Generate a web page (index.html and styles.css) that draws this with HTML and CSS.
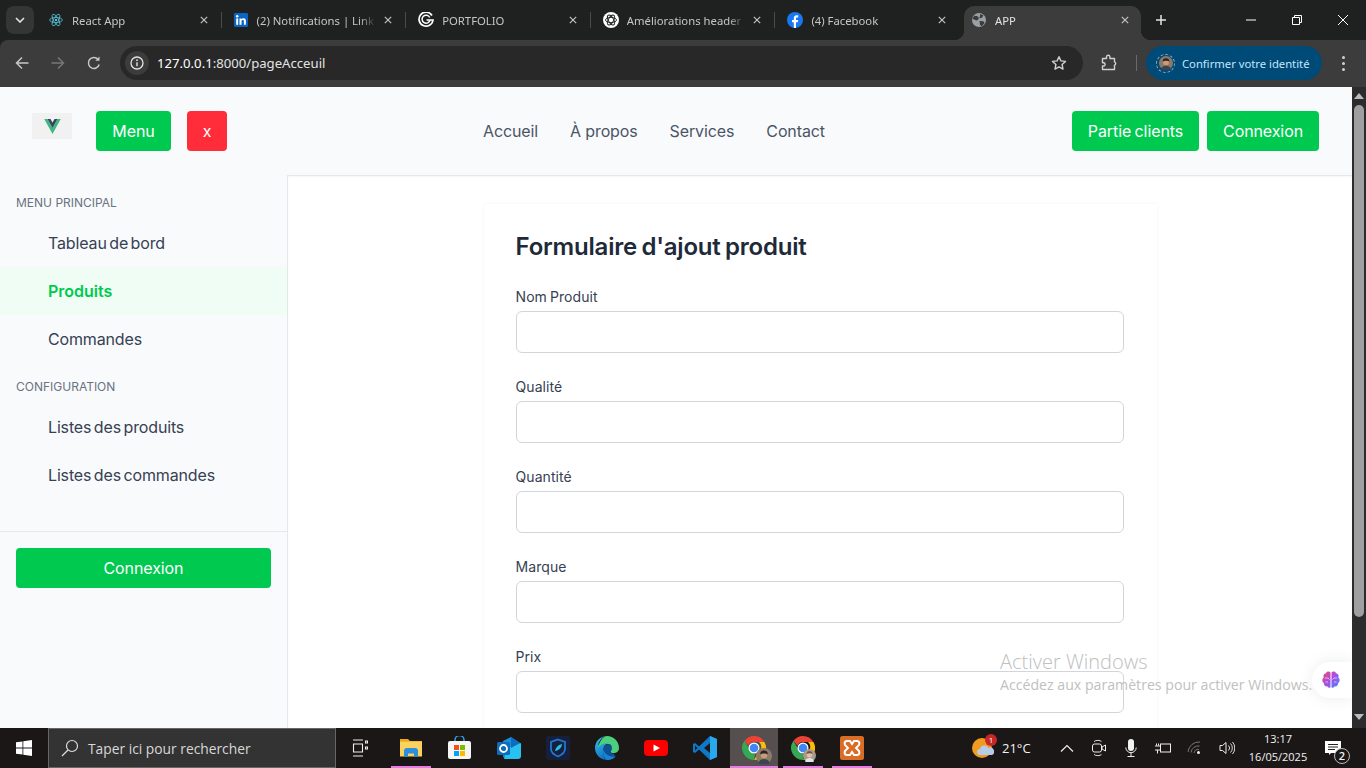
FILE: index.html
```html
<!DOCTYPE html>
<html lang="fr">
<head>
<meta charset="utf-8">
<title>APP</title>
<link rel="stylesheet" href="styles.css">
</head>
<body>
<svg class="defs" width="0" height="0">
  <symbol id="tabx" viewBox="0 0 10 10"><path d="M1 1l8 8M9 1L1 9" stroke="#c4c7c5" stroke-width="1.400"/></symbol>
  <symbol id="chromeicon" viewBox="0 0 24 24"><path d="M12 0a12 12 0 0 1 10.400 6H12a6 6 0 0 0-5.600 3.800L2.500 4.800A12 12 0 0 1 12 0z" fill="#ea4335"/><path d="M22.400 6A12 12 0 0 1 12 24l5-8.500A6 6 0 0 0 17 6z" fill="#fbbc04"/><path d="M12 24A12 12 0 0 1 2.500 4.800L7 12.500a6 6 0 0 0 6 5.500z" fill="#34a853"/><circle cx="12" cy="12" r="5.500" fill="#fff"/><circle cx="12" cy="12" r="4.300" fill="#4285f4"/></symbol>
  <symbol id="persona" viewBox="0 0 16 16"><circle cx="8" cy="8" r="8" fill="#8b7a68"/><path d="M2.500 15c.5-3 3-4 5.500-4s5 1 5.500 4a8 8 0 0 1-11 0z" fill="#3d4450"/><circle cx="8" cy="7" r="3.400" fill="#c89c78"/><path d="M4.300 6.500C4 3.500 6 2.500 8 2.500s4 1 3.700 4C10.500 5 6 5 4.300 6.500z" fill="#2b2320"/></symbol>
  <symbol id="personb" viewBox="0 0 16 16"><circle cx="8" cy="8" r="8" fill="#a89a8c"/><path d="M2.500 15c.5-3 3-4 5.500-4s5 1 5.500 4a8 8 0 0 1-11 0z" fill="#dfe3ea"/><circle cx="8" cy="7" r="3.400" fill="#e2c0a0"/><path d="M4.500 6C4.500 3.500 6 2.800 8 2.800s3.500.7 3.500 3.200C10 5 6 5 4.500 6z" fill="#6e5540"/></symbol>
</svg>
<div class="tabstrip">
  <div class="tabsearch"><svg width="10" height="6" viewBox="0 0 10 6"><path d="M1 1l4 4 4-4" fill="none" stroke="#e3e3e3" stroke-width="1.600"/></svg></div>
  <div class="tab sep">
    <svg class="fav" viewBox="0 0 16 16"><g fill="none" stroke="#58c4dc" stroke-width=".9"><ellipse cx="8" cy="8" rx="7.300" ry="2.900"/><ellipse cx="8" cy="8" rx="7.300" ry="2.900" transform="rotate(60 8 8)"/><ellipse cx="8" cy="8" rx="7.300" ry="2.900" transform="rotate(120 8 8)"/></g><circle cx="8" cy="8" r="1.400" fill="#58c4dc"/></svg>
    <span class="tab-title">React App</span><svg class="tab-x"><use href="#tabx"/></svg>
  </div>
  <div class="tab sep">
    <svg class="fav" viewBox="0 0 16 16"><rect width="16" height="16" rx="1.500" fill="#0a66c2"/><rect x="2.500" y="6.200" width="2.300" height="7.300" fill="#fff"/><circle cx="3.650" cy="3.800" r="1.400" fill="#fff"/><path d="M6.300 6.200h2.200v1c.5-.7 1.300-1.200 2.400-1.200 2.100 0 2.700 1.300 2.700 3.300v4.200h-2.300V9.800c0-1-.2-1.700-1.200-1.700-1.100 0-1.500.8-1.500 1.800v3.600H6.300z" fill="#fff"/></svg>
    <span class="tab-title">(2) Notifications | Link</span><svg class="tab-x"><use href="#tabx"/></svg>
  </div>
  <div class="tab sep">
    <svg class="fav fav-lg" viewBox="0 0 16 16"><path d="M14 3.500A7 7 0 1 0 15 8H8.500" fill="none" stroke="#fff" stroke-width="1.700"/><path d="M11.700 5.500A4 4 0 1 0 12 8" fill="none" stroke="#fff" stroke-width="1.500"/></svg>
    <span class="tab-title">PORTFOLIO</span><svg class="tab-x"><use href="#tabx"/></svg>
  </div>
  <div class="tab sep">
    <svg class="fav fav-lg" viewBox="0 0 16 16"><circle cx="8" cy="8" r="8" fill="#fff"/><g fill="none" stroke="#222" stroke-width=".9"><ellipse cx="8" cy="8" rx="5.500" ry="2.600"/><ellipse cx="8" cy="8" rx="5.500" ry="2.600" transform="rotate(60 8 8)"/><ellipse cx="8" cy="8" rx="5.500" ry="2.600" transform="rotate(120 8 8)"/></g></svg>
    <span class="tab-title">Améliorations header</span><svg class="tab-x"><use href="#tabx"/></svg>
  </div>
  <div class="tab">
    <svg class="fav fav-lg" viewBox="0 0 16 16"><circle cx="8" cy="8" r="8" fill="#1877f2"/><path d="M6.800 16V10.300H5V8h1.800V6.300C6.800 4.300 8 3.300 9.700 3.300c.8 0 1.500.1 1.500.1v2h-1c-1 0-1.200.5-1.200 1.200V8h2.200l-.4 2.300H9V16z" fill="#fff"/></svg>
    <span class="tab-title">(4) Facebook</span><svg class="tab-x"><use href="#tabx"/></svg>
  </div>
  <div class="tab tab-active">
    <svg class="fav" viewBox="0 0 16 16"><circle cx="8" cy="8" r="8" fill="#9aa0a6"/><path d="M2.500 3l3.500.5 2 2.500-2 2.500-2.500-.5L.5 6.500zM9.500 1l3.500 1.500-1.500 3-3 .5zM8.500 9l4.500.5 1.500 2-3.500 3.500-1.800-1.500z" fill="#3c3c3c"/></svg>
    <span class="tab-title">APP</span><svg class="tab-x"><use href="#tabx"/></svg>
  </div>
  <div class="newtab"><svg width="12" height="12" viewBox="0 0 12 12"><path d="M6 1v10M1 6h10" stroke="#e3e3e3" stroke-width="1.500"/></svg></div>
  <div class="winctl">
    <span class="winbtn"><svg width="10" height="10" viewBox="0 0 10 10"><path d="M0 5h10" stroke="#fff"/></svg></span>
    <span class="winbtn"><svg width="10" height="10" viewBox="0 0 10 10"><path d="M.5 2.500h7v7h-7zM2.500 2.500v-2h7v7h-2" fill="none" stroke="#fff"/></svg></span>
    <span class="winbtn"><svg width="10" height="10" viewBox="0 0 10 10"><path d="M0 0l10 10M10 0L0 10" stroke="#fff"/></svg></span>
  </div>
</div>

<div class="toolbar">
  <span class="navicon"><svg width="16" height="16" viewBox="0 0 16 16"><path d="M14.500 8h-12M8 2.500L2.500 8 8 13.500" fill="none" stroke="#c7c7c7" stroke-width="1.500"/></svg></span>
  <span class="navicon"><svg width="16" height="16" viewBox="0 0 16 16"><path d="M1.500 8h12M8 2.500L13.500 8 8 13.500" fill="none" stroke="#777" stroke-width="1.500"/></svg></span>
  <span class="navicon"><svg width="16" height="16" viewBox="0 0 16 16"><path d="M13.200 9.500A5.500 5.500 0 1 1 12 4.200" fill="none" stroke="#c7c7c7" stroke-width="1.500"/><path d="M13.500 1.500v4.200H9.300z" fill="#c7c7c7"/></svg></span>
  <div class="omnibox">
    <span class="infochip"><svg width="14" height="14" viewBox="0 0 14 14"><circle cx="7" cy="7" r="6" fill="none" stroke="#e3e3e3" stroke-width="1.300"/><path d="M7 6.200v4" stroke="#e3e3e3" stroke-width="1.400"/><circle cx="7" cy="4.200" r=".9" fill="#e3e3e3"/></svg></span>
    <span class="url"><b class="host">127.0.0.1</b>:8000/pageAcceuil</span>
    <svg class="star" width="16" height="16" viewBox="0 0 16 16"><path d="M8 1.700l1.900 4.200 4.600.5-3.400 3.100.9 4.600L8 11.800l-4 2.300.9-4.600L1.500 6.400l4.600-.5z" fill="none" stroke="#d0d0d0" stroke-width="1.400" stroke-linejoin="round"/></svg>
  </div>
  <span class="extbtn"><svg width="18" height="18" viewBox="0 0 18 18"><path d="M2.500 4.500H6.500V3a1.700 1.700 0 0 1 3.400-.2V4.500h4.600v3.300a1.800 1.800 0 0 1 0 3.400v4.300H2.500v-3.500h1a1.600 1.600 0 0 0 0-3.200h-1z" fill="none" stroke="#d0d0d0" stroke-width="1.400" stroke-linejoin="round"/></svg></span>
  <span class="tooldiv"></span>
  <div class="profile">
    <span class="avatar-ring"><svg class="avatar"><use href="#persona"/></svg></span>
    <span class="profile-text">Confirmer votre identité</span>
  </div>
  <span class="kebab"><i></i><i></i><i></i></span>
</div>

<div class="viewport">
  <div class="page">
    <header class="hdr">
      <div class="logo"><svg width="17" height="15" viewBox="0 0 16 14.500"><path d="M0 0h3.200L8 8.600 12.800 0H16L8 14.500z" fill="#41b883"/><path d="M3.200 0H6L8 3.400 10 0h2.800L8 8.600z" fill="#35495e"/></svg></div>
      <button class="btn btn-menu">Menu</button>
      <button class="btn btn-x">x</button>
      <nav class="hnav"><a>Accueil</a><a>À propos</a><a>Services</a><a>Contact</a></nav>
      <div class="hright"><button class="btn">Partie clients</button><button class="btn">Connexion</button></div>
    </header>
    <div class="body">
      <aside class="side">
        <div class="side-main">
          <div class="side-label">MENU PRINCIPAL</div>
          <a class="side-item">Tableau de bord</a>
          <a class="side-item current">Produits</a>
          <a class="side-item">Commandes</a>
          <div class="side-label second">CONFIGURATION</div>
          <a class="side-item">Listes des produits</a>
          <a class="side-item">Listes des commandes</a>
        </div>
        <div class="side-foot"><button class="btn btn-wide">Connexion</button></div>
      </aside>
      <main class="main">
        <section class="card">
          <h1 class="card-title">Formulaire d'ajout produit</h1>
          <div class="field"><label class="field-label">Nom Produit</label><input class="field-input" type="text"></div>
          <div class="field"><label class="field-label">Qualité</label><input class="field-input" type="text"></div>
          <div class="field"><label class="field-label">Quantité</label><input class="field-input" type="text"></div>
          <div class="field"><label class="field-label">Marque</label><input class="field-input" type="text"></div>
          <div class="field"><label class="field-label">Prix</label><input class="field-input" type="text"></div>
        </section>
      </main>
    </div>
    <div class="brain"><svg width="20" height="20" viewBox="0 0 20 20"><defs><linearGradient id="bg" x1="0" y1="0" x2="1" y2="1"><stop offset="0" stop-color="#f0476f"/><stop offset=".5" stop-color="#a84ee8"/><stop offset="1" stop-color="#3f8ef5"/></linearGradient></defs><path d="M9.500 2.500C8 .8 5.500 1.500 5 3.300 2.800 3.500 1.800 5.800 2.700 7.500 .8 9 1 12 2.900 13c-.3 2.300 1.800 3.800 3.400 3.300.9 1.700 2.500 1.800 3.200.9zM10.500 2.500C12 .8 14.500 1.500 15 3.300c2.200.2 3.200 2.500 2.300 4.200 1.900 1.500 1.700 4.500-.2 5.500.3 2.300-1.800 3.800-3.400 3.300-.9 1.700-2.500 1.800-3.200.9z" fill="url(#bg)"/><path d="M4 8h3l1.500 1.500M4.500 12H7M16 8h-3l-1.500 1.500M15.500 12H13" stroke="#fff" stroke-width=".6" fill="none"/></svg></div>
    <div class="activate">
      <div class="activate-h">Activer Windows</div>
      <div class="activate-s">Accédez aux paramètres pour activer Windows.</div>
    </div>
  </div>
  <div class="scrollbar">
    <svg class="sb-arrow" width="10" height="6" viewBox="0 0 10 6"><path d="M5 0l5 6H0z" fill="#bbb"/></svg>
    <div class="sb-track"><div class="sb-thumb"></div></div>
    <svg class="sb-arrow" width="10" height="6" viewBox="0 0 10 6"><path d="M5 6L0 0h10z" fill="#bbb"/></svg>
  </div>
</div>

<footer class="taskbar">
  <div class="startbtn"><svg width="16" height="16" viewBox="0 0 16 16"><path d="M0 2.300L6.500 1.400v6.200H0zM7.300 1.300L16 0v7.600H7.300zM0 8.400h6.500v6.200L0 13.700zM7.300 8.400H16V16l-8.700-1.200z" fill="#fff"/></svg></div>
  <div class="searchbox">
    <svg width="18" height="18" viewBox="0 0 18 18"><circle cx="11" cy="7" r="5.500" fill="none" stroke="#ddd" stroke-width="1.200"/><path d="M7 11l-6 6" stroke="#ddd" stroke-width="1.300"/></svg>
    <span class="search-text">Taper ici pour rechercher</span>
  </div>
  <span class="slot"><svg class="taskview" width="16" height="18" viewBox="0 0 16 18"><path d="M1 1h10M1 17h10M1.500 5h9v8h-9zM13.500 2h2v2h-2zM13.500 8h2v2h-2z" fill="none" stroke="#eee" stroke-width="1.100"/></svg></span>
  <span class="slot pin"><svg width="22" height="18" viewBox="0 0 22 18"><path d="M0 0h8l2 2h-10z" fill="#e8a91d"/><path d="M0 2h22v15.500H0z" fill="#fbd25f"/><path d="M0 2h22v1H0z" fill="#f2b731"/><path d="M4 12c0-2 1-3 3-3h8c2 0 3 1 3 3v5.500h-4v-3H8v3H4z" fill="#2b8fe0"/></svg></span>
  <span class="slot"><svg width="23" height="24" viewBox="0 0 23 24"><path d="M7 6V4a4.500 4.500 0 0 1 9 0v2" fill="none" stroke="#29a6e8" stroke-width="1.500"/><rect y="5" width="23" height="18" rx="2" fill="#f5f5f5"/><rect x="6" y="9" width="5" height="5" fill="#f25022"/><rect x="12" y="9" width="5" height="5" fill="#7fba00"/><rect x="6" y="15" width="5" height="5" fill="#00a4ef"/><rect x="12" y="15" width="5" height="5" fill="#ffb900"/></svg></span>
  <span class="slot"><svg width="24" height="24" viewBox="0 0 24 24"><path d="M6 5l8-4 9 6v6l-8 9H8c-2 0-2-2-2-3z" fill="#1490df"/><path d="M11 12l13-5v13c0 2-1 3-3 3H7z" fill="#28c2f0"/><path d="M14 1l9 6-9 5z" fill="#0f6cbd"/><rect y="6" width="13" height="13" rx="1.500" fill="#0f6cbd"/><circle cx="6.500" cy="12.500" r="3.500" fill="none" stroke="#fff" stroke-width="1.800"/></svg></span>
  <span class="slot"><svg width="24" height="24" viewBox="0 0 24 24"><rect width="24" height="24" rx="3" fill="#16203c"/><path d="M12 3.500l7 2.500v7c0 3.500-3.500 6-7 7.500-3.500-1.500-7-4-7-7.500V6z" fill="none" stroke="#2176d2" stroke-width="1.800"/><path d="M9 15c.5-3 3-6 7-7-.5 4-3 6.500-7 7z" fill="#22c1e6"/></svg></span>
  <span class="slot"><svg width="24" height="24" viewBox="0 0 24 24"><defs><linearGradient id="eg" x1="0" y1="0" x2=".6" y2="1"><stop offset="0" stop-color="#35c1f1"/><stop offset="1" stop-color="#0c6ab8"/></linearGradient></defs><path d="M12 0A12 12 0 0 0 0 12c0 7 6 12 12 12 3.500 0 6.500-1.300 8.500-3.500-6 2-12-1.500-12-7C8.500 9 12 7 16 8 12.500 3 4 6 3 10 4 4 8 0 12 0z" fill="url(#eg)"/><path d="M12 0c6.500 0 12 5 12 12 0 4-3.500 5.500-6.500 5-2-.3-2.500-1-2-1.500 2-2 1-7.500-4-8-4-.4-7 2-8.500 4.500C4.500 5 8 0 12 0z" fill="#4ccf7a"/><path d="M8.500 13.500c0-3.500 3-5.500 6-5.500 3 1 3 5.500 1 7.500-.5 2 2 2 3 1.800l2 3.200c-2 2.200-5 3.500-8.500 3.500-4 0-3.500-6.500-3.500-10.500z" fill="#0f4f94"/><path d="M8.500 13.500c1.500 5 6.500 8 12 7-2 2.200-5 3.500-8.500 3.500-3.500-2-4-7-3.500-10.500z" fill="#1783d6"/></svg></span>
  <span class="slot"><svg width="24" height="16" viewBox="0 0 24 16"><rect width="24" height="16" rx="4" fill="#f00"/><path d="M9.500 4.500l6.500 3.500-6.500 3.500z" fill="#fff"/></svg></span>
  <span class="slot"><svg width="24" height="24" viewBox="0 0 24 24"><path d="M17 0l7 3v18l-7 3L6 13.500 2 17l-2-1V8l2-1 4 3.500z" fill="#0e79c8"/><path d="M17 0l7 3v18l-7 3z" fill="#29a8ee"/><path d="M17 7v10l-6-5z" fill="#1a1717"/><path d="M2 9.500v5l2.500-2.500z" fill="#1a1717"/></svg></span>
  <span class="slot slot-active pin"><svg class="chrome"><use href="#chromeicon"/></svg><svg class="badge badge-a"><use href="#persona"/></svg></span>
  <span class="slot pin"><svg class="chrome"><use href="#chromeicon"/></svg><svg class="badge badge-b"><use href="#personb"/></svg></span>
  <span class="slot pin"><svg width="24" height="24" viewBox="0 0 24 24"><rect width="24" height="24" rx="2.500" fill="#d96d26"/><path d="M7 5h3l2 3 2-3h3c3 0 3 4 1 5l-2 2 2 2c2 1 2 5-1 5h-3l-2-3-2 3H7c-3 0-3-4-1-5l2-2-2-2C4 9 4 5 7 5z" fill="none" stroke="#fff" stroke-width="2"/></svg></span>
  <div class="tray">
    <div class="weather">
      <span class="wx-icon"><svg width="22" height="22" viewBox="0 0 22 22"><circle cx="10" cy="11" r="10" fill="#f29a1f"/><path d="M8 18a3 3 0 0 1 0-6 4.500 4.500 0 0 1 8.500-1 3.500 3.500 0 0 1 3.500 7z" fill="#b8cbe6"/></svg><span class="wx-badge">1</span></span>
      <span class="wx-text">21°C</span>
    </div>
    <span class="tray-item"><svg width="14" height="8" viewBox="0 0 14 8"><path d="M1 7.500l6-6 6 6" fill="none" stroke="#eee" stroke-width="1.200"/></svg></span>
    <span class="tray-item"><svg width="14" height="18" viewBox="0 0 14 18"><path d="M2 2.500C4 1 8 1 9.500 2.500M2 15.500c2 1.500 6 1.500 7.500 0" fill="none" stroke="#ddd"/><rect x=".5" y="5" width="9" height="8" rx="2" fill="none" stroke="#eee"/><path d="M10 8l3.500-2v6L10 10z" fill="none" stroke="#eee"/></svg></span>
    <span class="tray-item"><svg width="12" height="18" viewBox="0 0 12 18"><rect x="3" y="0" width="6" height="12" rx="3" fill="#f2f2f2"/><path d="M.8 8.500a5.200 5.200 0 0 0 10.400 0M6 14v3.500M2.500 17.500h7" fill="none" stroke="#eee"/></svg></span>
    <span class="tray-item"><svg width="16" height="12" viewBox="0 0 16 12"><rect x="5.500" y="2" width="10" height="8" fill="none" stroke="#eee"/><path d="M0 4h5M0 8h5M1.500 1.500v2M3.500 1.500v2M2.500 8v3.500" stroke="#eee" fill="none"/></svg></span>
    <span class="tray-item"><svg width="16" height="14" viewBox="0 0 16 14"><path d="M1 11A11 11 0 0 1 13 1M4 11.500A7.500 7.500 0 0 1 12.500 5M7 12A4 4 0 0 1 12 8.500" fill="none" stroke="#777"/><circle cx="11.500" cy="11.500" r="1.500" fill="#eee"/></svg></span>
    <span class="tray-item"><svg width="16" height="14" viewBox="0 0 16 14"><path d="M1 4.500h2.500L7 1.500v11l-3.500-3H1z" fill="none" stroke="#eee"/><path d="M9.500 4.500a3.500 3.500 0 0 1 0 5M11.500 2.500a6.500 6.500 0 0 1 0 9M13.500 1a9 9 0 0 1 0 12" fill="none" stroke="#ddd"/></svg></span>
    <div class="clock"><span>13:17</span><span>16/05/2025</span></div>
    <span class="notif"><svg width="16" height="14" viewBox="0 0 16 14"><path d="M0 0h16v12H6l-2 2v-2H0z" fill="#fff"/><path d="M3 3.500h10M3 6h10M3 8.500h7" stroke="#222"/></svg><span class="notif-count">2</span></span>
  </div>
</footer>
</body>
</html>
```
FILE: styles.css
```css
* { box-sizing: border-box; }
html, body { margin: 0; height: 100%; }
body {
  width: 1366px; height: 768px; overflow: hidden;
  display: flex; flex-direction: column;
  font-family: "Inter", "Liberation Sans", sans-serif;
  background: #1f2121;
}
svg { display: block; flex: none; }
.defs { position: absolute; }

/* Browser tab strip */
.tabstrip {
  height: 40px; display: flex; align-items: flex-start;
  background: #1f2121; padding-left: 6px;
  font-family: "Noto Sans", "Liberation Sans", sans-serif;
}
.tabsearch {
  width: 28px; height: 28px; margin: 6px 7px 0 0;
  background: #343636; border-radius: 8px;
  display: flex; align-items: center; justify-content: center;
}
.tab {
  width: 184.6px; height: 34px; margin-top: 6px; padding: 0 14px 6px 8px;
  display: flex; align-items: center; position: relative;
}
.tab.sep::after {
  content: ""; position: absolute; right: 4px; top: 6px;
  width: 1px; height: 16px; background: #4a4c4c;
}
.fav { width: 14px; height: 14px; margin-right: 9px; }
.fav-lg { width: 16px; height: 16px; margin-right: 8px; }
.tab-title {
  flex: 1; min-width: 0; white-space: nowrap; overflow: hidden;
  font-size: 11.300px; color: #c4c7c5;
  mask-image: linear-gradient(90deg, #000 86%, transparent 100%);
}
.tab-x { width: 16px; height: 8px; margin-left: 4px; }
.tab-active {
  width: 177px; height: 34px; background: #3c3c3c;
  border-radius: 10px 10px 0 0; padding-right: 8px;
}
.tab-active .tab-title { color: #e3e3e3; }
.tab-active::before, .tab-active::after {
  content: ""; position: absolute; bottom: 0; width: 10px; height: 10px;
}
.tab-active::before { left: -10px; background: radial-gradient(circle at 0 0, transparent 10px, #3c3c3c 10.500px); }
.tab-active::after { right: -10px; background: radial-gradient(circle at 100% 0, transparent 10px, #3c3c3c 10.500px); }
.newtab {
  width: 28px; height: 28px; margin: 6px 0 0 6px;
  display: flex; align-items: center; justify-content: center;
}
.winctl { margin-left: auto; display: flex; }
.winbtn { width: 46px; height: 40px; display: flex; align-items: center; justify-content: center; }

/* Toolbar */
.toolbar {
  height: 47px; background: #3c3c3c; border-radius: 8px 0 0 0;
  display: flex; align-items: center; padding: 0 0 1px 4px;
  font-family: "Noto Sans", "Liberation Sans", sans-serif;
}
.navicon { width: 36px; display: flex; justify-content: center; }
.omnibox {
  width: 963px; height: 34px; margin-left: 8px; padding-left: 5px;
  background: #282828; border-radius: 17px;
  display: flex; align-items: center;
}
.infochip {
  width: 24px; height: 24px; border-radius: 50%; background: #3c3c3c;
  display: flex; align-items: center; justify-content: center;
}
.url { margin-left: 8px; font-size: 13.150px; color: #e3e3e3; }
.host { font-weight: 400; color: #fff; }
.star { margin-left: auto; margin-right: 16px; }
.extbtn { width: 18px; margin-left: 17px; }
.tooldiv { width: 1px; height: 16px; background: #6a6a6a; margin-left: 18px; margin-right: 9px; }
.profile {
  width: 176px; height: 34px; border-radius: 17px; background: #004a77;
  display: flex; align-items: center; padding-left: 10px;
}
.avatar-ring {
  width: 19px; height: 19px; border-radius: 50%; border: 1px dashed #8fb4cc;
  display: flex; align-items: center; justify-content: center;
}
.avatar { width: 14px; height: 14px; }
.profile-text { margin-left: 7px; font-size: 11.250px; color: #c2e7ff; white-space: nowrap; }
.kebab { margin-left: 20px; display: flex; flex-direction: column; gap: 3px; }
.kebab i { width: 3px; height: 3px; border-radius: 50%; background: #d0d0d0; display: block; }

/* Viewport */
.viewport { height: 641px; display: flex; }
.page { width: 1352px; position: relative; overflow: hidden; background: #fff; display: flex; flex-direction: column; }
.scrollbar { width: 14px; background: #2c2c2c; display: flex; flex-direction: column; align-items: center; padding: 6px 0 8px; }
.sb-track { flex: 1; width: 100%; padding: 6px 2px 0; }
.sb-thumb { height: 512px; background: #9f9f9f; border-radius: 5px; }

/* Header */
.hdr {
  height: 88px; flex: none; background: #f9fafc;
  display: flex; align-items: flex-start; padding: 24px 33px 0 32px;
}
.logo {
  width: 40px; height: 26px; margin-top: 2px; background: #f1f1f1;
  display: flex; align-items: center; justify-content: center;
}
.btn {
  height: 40px; padding: 0 16px; border: 0; border-radius: 4px;
  background: #00c950; color: #fff; font: 400 16px "Inter", sans-serif;
  white-space: nowrap; letter-spacing: -.1px; word-spacing: -1px;
}
.btn-menu { margin-left: 24px; width: 75px; }
.btn-x { margin-left: 16px; width: 40px; padding: 0; background: #ff2c3a; }
.hnav { margin-left: 256px; height: 40px; display: flex; align-items: center; gap: 32px; }
.hnav a { font-size: 16px; letter-spacing: -.12px; color: #4a5565; }
.hright { margin-left: auto; display: flex; gap: 8px; }

/* Body */
.body { flex: 1; min-height: 0; display: flex; }
.side {
  width: 288px; flex: none; background: #f9fafc; border-right: 1px solid #e5e7eb;
  display: flex; flex-direction: column;
}
.side-main { height: 357px; padding-top: 18px; border-bottom: 1px solid #e5e7eb; }
.side-label { height: 20px; margin-bottom: 6px; padding-left: 16px; font-size: 12px; line-height: 20px; color: #6a7282; }
.side-label.second { margin-top: 14px; }
.side-item { display: block; height: 48px; padding-left: 48px; font-size: 16px; line-height: 48px; letter-spacing: -.15px; word-spacing: -1.800px; color: #364153; }
.side-item.current { background: #f0fdf4; color: #00c950; font-weight: 600; letter-spacing: 0; }
.side-foot { padding: 16px; }
.btn-wide { width: 255px; }
.main {
  flex: 1; min-width: 0; border-top: 1px solid #e5e7eb; padding-top: 28px;
  display: flex; justify-content: center; overflow: hidden;
  box-shadow: inset 0 1px 2px rgba(0,0,0,.04);
}
.card {
  width: 673px; flex: none; height: 700px; padding: 27px 32px;
  background: #fff; box-shadow: 0 0 3px rgba(0,0,0,.05);
}
.card-title { margin: 0 0 24px; font-size: 24px; line-height: 32px; font-weight: 600; letter-spacing: -.2px; word-spacing: -1.500px; color: #1e2939; }
.field { margin-bottom: 24px; }
.field-label { display: block; height: 20px; margin-bottom: 4px; font-size: 14px; line-height: 20px; word-spacing: -1px; letter-spacing: .08px; color: #364153; }
.field-input { display: block; width: 608px; height: 42px; border: 1px solid #d1d5dc; border-radius: 6px; background: #fff; }

/* Overlays */
.brain {
  position: absolute; right: 0; top: 575px; width: 40px; height: 36px;
  background: #fff; border-radius: 18px 0 0 18px; box-shadow: 0 0 16px rgba(0,0,0,.08);
  display: flex; align-items: center; justify-content: center; padding-right: 2px;
}
.activate {
  position: absolute; left: 1000px; top: 563px; color: #c0c0c0;
  font-family: "Open Sans", "Liberation Sans", sans-serif; pointer-events: none; white-space: nowrap;
}
.activate-h { font-size: 20px; line-height: 24px; font-weight: 300; }
.activate-s { font-size: 14.150px; line-height: 20px; margin-top: 1px; }

/* Taskbar */
.taskbar {
  height: 40px; background: #1b1717; display: flex; align-items: stretch;
  font-family: "Open Sans", "Liberation Sans", sans-serif; color: #f2f2f2;
}
.startbtn { width: 48px; display: flex; align-items: center; justify-content: center; }
.searchbox {
  width: 288px; margin-right: 1px; background: #333; border: 1px solid #666;
  display: flex; align-items: center; padding-left: 12px;
}
.search-text { margin-left: 9px; font-size: 13.800px; color: #d8d8d8; }
.slot { width: 49px; display: flex; align-items: center; justify-content: center; position: relative; }
.taskview { margin-right: 3px; }
.pin::after {
  content: ""; position: absolute; left: 5px; right: 4px; bottom: 0; height: 2px; background: #e87ae4;
}
.slot-active { background: #564f4f; border-left: 1px solid #1b1717; }
.slot-active::after { left: 0; right: 0; }
.chrome { width: 24px; height: 24px; }
.badge { position: absolute; }
.badge-a { width: 16px; height: 16px; left: 26px; top: 20px; }
.badge-b { width: 13px; height: 13px; left: 25px; top: 21px; }
.tray { margin-left: auto; display: flex; padding-right: 13px; }
.weather { width: 86px; display: flex; align-items: center; padding-left: 7px; }
.wx-icon { position: relative; }
.wx-badge {
  position: absolute; right: -3px; top: -3px; width: 12px; height: 12px; border-radius: 50%;
  background: #c62828; color: #fff; font-size: 8px; line-height: 12px; text-align: center;
}
.wx-text { margin-left: 8px; font-size: 13px; }
.tray-item { width: 32px; display: flex; align-items: center; justify-content: center; }
.clock {
  width: 70px; display: flex; flex-direction: column; align-items: center; justify-content: center;
  font-size: 11px; line-height: 18px;
}
.notif { width: 40px; display: flex; align-items: center; justify-content: center; position: relative; }
.notif-count {
  position: absolute; left: 21px; top: 20px; width: 16px; height: 16px; border-radius: 50%;
  background: #1b1717; border: 1px solid #bbb; font-size: 11px; line-height: 14px; text-align: center; font-weight: 600;
}
```
